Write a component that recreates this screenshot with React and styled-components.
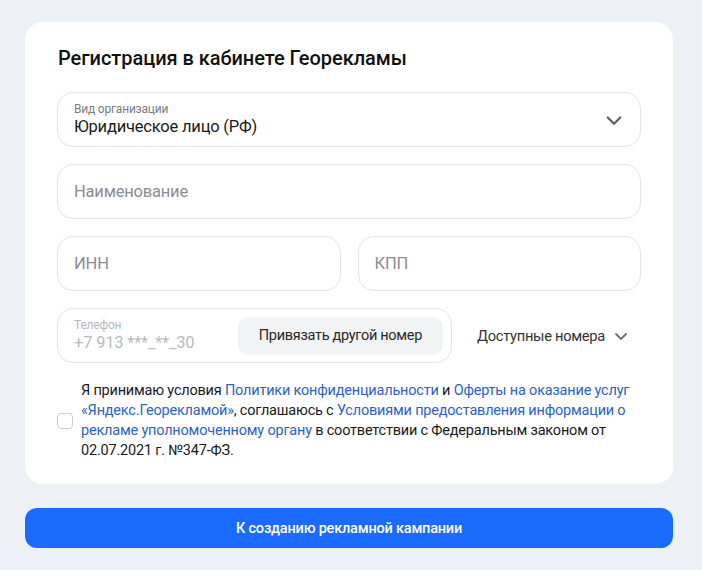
import styled, { createGlobalStyle } from 'styled-components';

const GlobalStyle = createGlobalStyle`
  body {
    margin: 0;
    background: #edf0f4;
    font-family: Roboto, "Noto Sans", sans-serif;
    color: #1a1a1a;
  }
`;

const Page = styled.div`
  display: flex;
  flex-direction: column;
  gap: 24px;
  padding: 22px 29px 22px 25px;
`;

const Card = styled.div`
  display: flex;
  flex-direction: column;
  padding: 22px 32px 23px 32px;
  border-radius: 18px;
  background: #fff;
`;

const Title = styled.h1`
  margin: 0 0 20px 1px;
  font-size: 20px;
  font-weight: 500;
  line-height: 28px;
  color: #111;
  letter-spacing: -0.05px;
`;

const Fields = styled.div`
  display: flex;
  flex-direction: column;
  gap: 17px;
`;

const Row = styled.div`
  display: grid;
  grid-template-columns: ${({ cols }) => cols};
  gap: 17px;
  align-items: center;
`;

const Field = styled.div`
  display: flex;
  align-items: center;
  height: 55px;
  box-sizing: border-box;
  padding: 0 8px 0 16px;
  border: 1px solid #e3e5e8;
  border-radius: 16px;
  background: #fff;
`;

const FieldText = styled.div`
  display: flex;
  flex: 1;
  flex-direction: column;
  justify-content: center;
`;

const Label = styled.span`
  font-size: 12px;
  line-height: 14px;
  color: ${({ muted }) => (muted ? '#b5b8bd' : '#7a7d82')};
  letter-spacing: -0.2px;
`;

const Value = styled.span`
  font-size: 16.5px;
  line-height: 22px;
  color: ${({ muted }) => (muted ? '#b8bbc0' : '#1a1a1a')};
  letter-spacing: -0.2px;
`;

const Placeholder = styled.span`
  font-size: 16.5px;
  color: #8a8d92;
  letter-spacing: -0.2px;
`;

const Chevron = ({ size = 18, color = '#5d6066' }) => (
  <svg width={size} height={size} viewBox="0 0 16 16" fill="none">
    <path d="M3 6l5 5 5-5" stroke={color} strokeWidth="1.8" strokeLinecap="round" strokeLinejoin="round" />
  </svg>
);

const IconBox = styled.span`
  display: flex;
  margin-right: ${({ mr }) => mr || 0}px;
`;

const GrayButton = styled.button`
  height: 38px;
  padding: 0 21px;
  border: none;
  border-radius: 10px;
  background: #f2f3f5;
  font-family: inherit;
  font-size: 14.5px;
  color: #2a2a2a;
  letter-spacing: -0.3px;
`;

const Numbers = styled.div`
  display: flex;
  align-items: center;
  gap: 8px;
  padding-left: 8px;
  font-size: 14.7px;
  color: #333;
  letter-spacing: -0.3px;
`;

const Agreement = styled.div`
  display: flex;
  align-items: center;
  gap: 8px;
  margin-top: 18px;
`;

const Checkbox = styled.span`
  flex: none;
  width: 14px;
  height: 14px;
  border: 1px solid #c9ccd1;
  border-radius: 4px;
`;

const AgreementText = styled.p`
  margin: 0;
  font-size: 14.5px;
  line-height: 20px;
  color: #1a1a1a;
  letter-spacing: -0.2px;
`;

const Link = styled.a`
  color: #2d63c8;
  text-decoration: none;
`;

const Primary = styled.button`
  height: 40px;
  border: none;
  border-radius: 12px;
  background: #1c6bff;
  font-family: inherit;
  font-size: 14.5px;
  font-weight: 500;
  color: #fff;
  letter-spacing: -0.2px;
`;

export default function App() {
  return (
    <>
      <GlobalStyle />
      <Page>
        <Card>
          <Title>Регистрация в кабинете Георекламы</Title>
          <Fields>
            <Field>
              <FieldText>
                <Label>Вид организации</Label>
                <Value>Юридическое лицо (РФ)</Value>
              </FieldText>
              <IconBox mr={8}>
                <Chevron size={20} />
              </IconBox>
            </Field>
            <Field>
              <Placeholder>Наименование</Placeholder>
            </Field>
            <Row cols="1fr 1fr">
              <Field>
                <Placeholder>ИНН</Placeholder>
              </Field>
              <Field>
                <Placeholder>КПП</Placeholder>
              </Field>
            </Row>
            <Row cols="395px 1fr">
              <Field>
                <FieldText>
                  <Label muted>Телефон</Label>
                  <Value muted>+7 913 ***_**_30</Value>
                </FieldText>
                <GrayButton>Привязать другой номер</GrayButton>
              </Field>
              <Numbers>
                Доступные номера
                <Chevron size={16} color="#6a6d72" />
              </Numbers>
            </Row>
          </Fields>
          <Agreement>
            <Checkbox />
            <AgreementText>
              Я принимаю условия <Link>Политики конфиденциальности</Link> и{' '}
              <Link>Оферты на оказание услуг «Яндекс.Георекламой»</Link>, соглашаюсь с{' '}
              <Link>Условиями предоставления информации о рекламе уполномоченному органу</Link> в
              соответствии с Федеральным законом от 02.07.2021 г. №347-ФЗ.
            </AgreementText>
          </Agreement>
        </Card>
        <Primary>К созданию рекламной кампании</Primary>
      </Page>
    </>
  );
}
